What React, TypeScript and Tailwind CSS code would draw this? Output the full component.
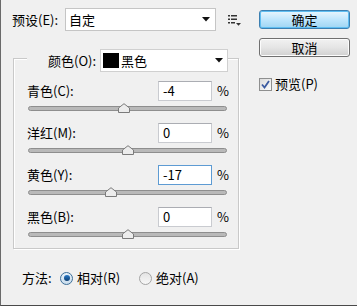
import React from "react";

const FONT = { fontFamily: '"Noto Sans CJK SC", "Noto Sans", sans-serif' };

function Arrow() {
  return (
    <svg width="8" height="5" viewBox="0 0 8 5">
      <polygon points="0,0 8,0 4,4.5" fill="#111" />
    </svg>
  );
}

function ListIcon() {
  return (
    <svg width="13" height="11" viewBox="0 0 13 11">
      <rect x="0" y="0" width="2" height="1.5" fill="#333" />
      <rect x="3" y="0" width="6" height="1.5" fill="#333" />
      <rect x="0" y="3.5" width="2" height="1.5" fill="#333" />
      <rect x="3" y="3.5" width="6" height="1.5" fill="#333" />
      <rect x="0" y="7" width="2" height="1.5" fill="#333" />
      <rect x="3" y="7" width="4" height="1.5" fill="#333" />
      <polygon points="8,8 13,8 10.5,10.8" fill="#333" />
    </svg>
  );
}

function Thumb() {
  return (
    <svg width="12" height="10" viewBox="0 0 12 10">
      <polygon
        points="0.5,9.5 0.5,5 6,0.7 11.5,5 11.5,9.5"
        fill="#ececec"
        stroke="#7b7b7b"
        strokeWidth="1"
      />
    </svg>
  );
}

function Row({ label, value, focused }: { label: string; value: number; focused?: boolean }) {
  const x = 99.5 + value * 0.995; // thumb center relative to track start
  return (
    <div className="flex flex-col">
      <div className="flex items-center h-[20px]">
        <span className="flex-1 text-[13px] leading-[20px] text-black">{label}</span>
        <div
          className={
            "w-[54px] h-[20px] bg-white flex items-center pl-[4px] text-[13px] leading-[18px] text-black border " +
            (focused ? "border-[#5d9bd3]" : "border-[#c9cbd0] border-t-[#abadb3]")
          }
        >
          {value}
        </div>
        <span className="ml-[5px] w-[12px] text-[13px] leading-[20px] text-black">%</span>
      </div>
      <div className="relative h-[14px] w-[199px] ml-[1px]">
        <div className="absolute left-0 right-0 top-[5px] h-[5px] rounded-full bg-[#b9b9b9] border border-[#8e8e8e]" />
        <div className="absolute top-[2px]" style={{ left: x - 6 }}>
          <Thumb />
        </div>
      </div>
    </div>
  );
}

function Radio({ checked }: { checked?: boolean }) {
  return (
    <div
      className={
        "w-[13px] h-[13px] rounded-full border flex items-center justify-center " +
        (checked
          ? "border-[#3d6f99] bg-gradient-to-b from-[#e8f2fa] to-[#c9dcec]"
          : "border-[#a4a4a4] bg-gradient-to-b from-[#e4e4e4] to-[#f7f7f7]")
      }
    >
      {checked && (
        <div className="w-[6px] h-[6px] rounded-full bg-gradient-to-b from-[#2a7ac7] to-[#0d3f73]" />
      )}
    </div>
  );
}

export default function App() {
  return (
    <div
      style={FONT}
      className="w-[357px] h-[306px] bg-[#f0f0f0] border-l border-b border-l-[#6a6a6a] border-b-[#4a4a4a] flex text-black select-none"
    >
      {/* Left part */}
      <div className="w-[258px] flex flex-col">
        <div className="flex items-center mt-[8px] h-[23px]">
          <span className="ml-[11px] w-[53px] text-[13px] leading-[20px]">预设(E):</span>
          <div className="w-[151px] h-[23px] bg-white border border-[#c5c5c5] flex items-center pl-[3px] pr-[5px]">
            <span className="flex-1 text-[13px] leading-[20px]">自定</span>
            <Arrow />
          </div>
          <div className="ml-[12px] mt-[2px]">
            <ListIcon />
          </div>
        </div>

        {/* group box */}
        <div className="relative ml-[12px] mt-[27px] w-[226px] h-[191px] border border-[#c9c9c9] shadow-[inset_1px_1px_0_#ffffff,1px_1px_0_#ffffff] pt-[22px] pl-[13px] pr-[9px]">
          <div className="absolute left-[13px] -top-[10px] flex items-center bg-[#f0f0f0] pl-[21px]">
            <span className="text-[13px] leading-[20px] w-[52px]">颜色(O):</span>
            <div className="w-[128px] h-[23px] bg-white border border-[#d0d0d0] flex items-center pl-[2px] pr-[4px]">
              <div className="w-[16px] h-[15px] bg-black" />
              <span className="ml-[2px] flex-1 text-[13px] leading-[20px]">黑色</span>
              <Arrow />
            </div>
          </div>
          <div className="flex flex-col gap-[8px]">
            <Row label="青色(C):" value={-4} />
            <Row label="洋红(M):" value={0} />
            <Row label="黄色(Y):" value={-17} focused />
            <Row label="黑色(B):" value={0} />
          </div>
        </div>

        <div className="flex items-center mt-[19px] h-[20px] ml-[21px] text-[13px] leading-[20px]">
          <span className="w-[38px]">方法:</span>
          <Radio checked />
          <span className="ml-[4px] w-[62px]">相对(R)</span>
          <Radio />
          <span className="ml-[4px]">绝对(A)</span>
        </div>
      </div>

      {/* Right part */}
      <div className="flex flex-col pt-[10px]">
        <div className="w-[91px] h-[19px] rounded-[3px] border border-[#3c7fb1] bg-gradient-to-b from-[#eaf6fd] via-[#bfe6fd] to-[#9fd5f3] shadow-[inset_0_0_0_1px_#5fbef2] flex items-center justify-center text-[13px] leading-[16px]">
          确定
        </div>
        <div className="mt-[9px] w-[91px] h-[19px] rounded-[3px] border border-[#707070] bg-gradient-to-b from-[#f2f2f2] via-[#e5e5e5] to-[#d0d0d0] shadow-[inset_0_0_0_1px_#fcfcfc] flex items-center justify-center text-[13px] leading-[16px]">
          取消
        </div>
        <div className="mt-[17px] flex items-center">
          <div className="w-[13px] h-[13px] border border-[#8e8f8f] bg-gradient-to-br from-[#dcdcdc] to-[#fbfbfb] flex items-center justify-center">
            <svg width="9" height="9" viewBox="0 0 9 9">
              <polyline points="1,4.5 3.5,7.5 8,1" fill="none" stroke="#3b5aa0" strokeWidth="1.8" />
            </svg>
          </div>
          <span className="ml-[3px] text-[13px] leading-[20px]">预览(P)</span>
        </div>
      </div>
    </div>
  );
}
